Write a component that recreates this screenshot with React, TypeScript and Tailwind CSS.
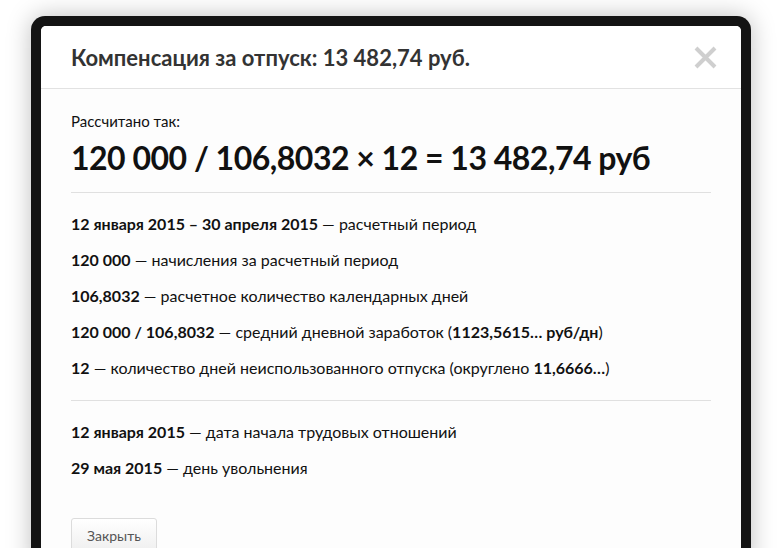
const rows = [
  { b: "12 января 2015 – 30 апреля 2015", t: " — расчетный период" },
  { b: "120 000", t: " — начисления за расчетный период" },
  { b: "106,8032", t: " — расчетное количество календарных дней" },
];

export default function App() {
  return (
    <div
      className="h-[548px] overflow-hidden bg-white pt-4 pl-[31px]"
      style={{ fontFamily: "Lato, 'Open Sans', sans-serif" }}
    >
      <div className="w-[720px] h-[560px] rounded-[14px] bg-[#141414] p-[10px] shadow-[0_0_24px_rgba(0,0,0,0.25)]">
        <div className="h-full rounded-[5px] bg-[#fdfdfd] overflow-hidden text-[#111]">
          <div className="h-[63px] bg-white border-b border-[#e2e2e2] flex items-center justify-between pl-[30px] pr-[24px]">
            <h1 className="text-[22px] font-bold text-[#333]">
              Компенсация за отпуск: 13 482,74 руб.
            </h1>
            <svg width="23" height="23" viewBox="0 0 23 23" className="mt-[1px]">
              <path d="M2 2 L21 21 M21 2 L2 21" stroke="#cfcfcf" strokeWidth="4" />
            </svg>
          </div>

          <div className="px-[30px] pt-[22px]">
            <p className="text-[15px] leading-5">Рассчитано так:</p>
            <p className="text-[32px] font-bold leading-10 mt-[7px] tracking-[-0.5px]">
              120 000 / 106,8032 × 12 = 13 482,74 руб
            </p>
            <div className="border-t border-[#e0e0e0] mt-[14px]" />

            <div className="text-[16px] leading-9 pt-[13px] pb-[14px]">
              {rows.map((r) => (
                <p key={r.b}>
                  <b>{r.b}</b>
                  {r.t}
                </p>
              ))}
              <p>
                <b>120 000 / 106,8032</b> — средний дневной заработок (<b>1123,5615… руб/дн</b>)
              </p>
              <p>
                <b>12</b> — количество дней неиспользованного отпуска (округлено <b>11,6666…</b>)
              </p>
            </div>
            <div className="border-t border-[#e0e0e0]" />

            <div className="text-[16px] leading-9 pt-[13px]">
              <p>
                <b>12 января 2015</b> — дата начала трудовых отношений
              </p>
              <p>
                <b>29 мая 2015</b> — день увольнения
              </p>
            </div>

            <button className="mt-[32px] h-[34px] w-[86px] rounded-[3px] border border-[#dcdcdc] bg-gradient-to-b from-white to-[#efefef] text-[14px] text-[#555]">
              Закрыть
            </button>
          </div>
        </div>
      </div>
    </div>
  );
}
